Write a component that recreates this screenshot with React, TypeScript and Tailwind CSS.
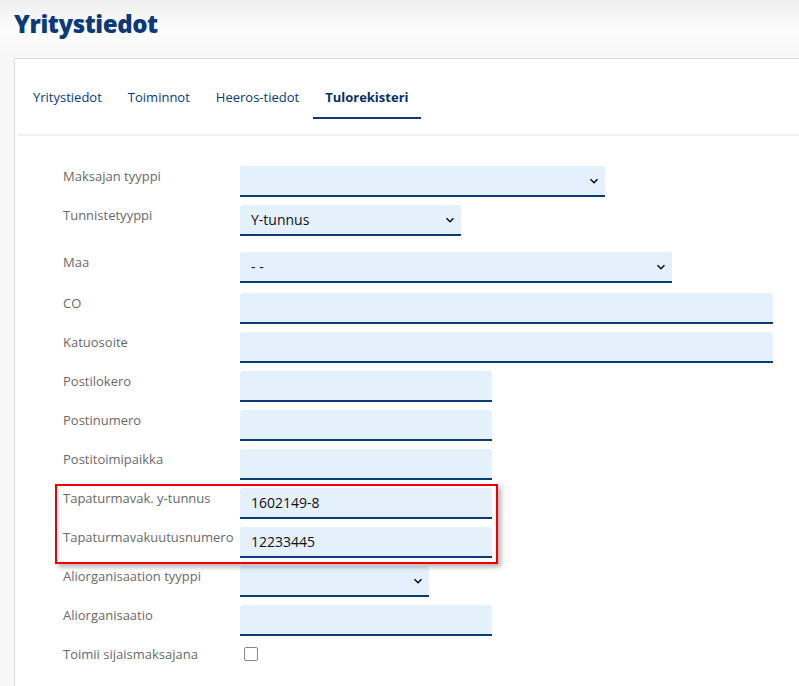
import React from "react";

type Field = {
  label: string;
  kind: "select" | "input" | "checkbox";
  width?: string;
  value?: string;
  rowClass?: string;
};

const fields: Field[] = [
  { label: "Maksajan tyyppi", kind: "select", width: "w-[365px]" },
  { label: "Tunnistetyyppi", kind: "select", width: "w-[221px]", value: "Y-tunnus" },
  { label: "Maa", kind: "select", width: "w-[432px]", value: "- -", rowClass: "pt-[8px] pb-[10px]" },
  { label: "CO", kind: "input", width: "w-[533px]" },
  { label: "Katuosoite", kind: "input", width: "w-[533px]" },
  { label: "Postilokero", kind: "input", width: "w-[252px]" },
  { label: "Postinumero", kind: "input", width: "w-[252px]" },
  { label: "Postitoimipaikka", kind: "input", width: "w-[252px]" },
  { label: "Tapaturmavak. y-tunnus", kind: "input", width: "w-[252px]", value: "1602149-8" },
  { label: "Tapaturmavakuutusnumero", kind: "input", width: "w-[252px]", value: "12233445" },
  { label: "Aliorganisaation tyyppi", kind: "select", width: "w-[189px]" },
  { label: "Aliorganisaatio", kind: "input", width: "w-[252px]" },
  { label: "Toimii sijaismaksajana", kind: "checkbox" },
];

const tabs = ["Yritystiedot", "Toiminnot", "Heeros-tiedot", "Tulorekisteri"];

function Chevron() {
  return (
    <svg width="10" height="6" viewBox="0 0 10 6" className="shrink-0">
      <path d="M1.5 1.2l3.5 3.5 3.5-3.5" fill="none" stroke="#111" strokeWidth="1.6" />
    </svg>
  );
}

function Control({ field }: { field: Field }) {
  if (field.kind === "checkbox") {
    return (
      <div className="h-[14px] w-[14px] mt-[3px] ml-[4px] rounded-[2px] border border-[#8a8a8a] bg-white" />
    );
  }
  return (
    <div
      className={`${field.width} h-[31px] flex items-center justify-between rounded-t-[3px] bg-[#e4f0fc] border-b-2 border-[#0b3a78] pl-[11px] pr-[6px] text-[14px] text-[#111]`}
    >
      <span>{field.value ?? ""}</span>
      {field.kind === "select" && <Chevron />}
    </div>
  );
}

export default function App() {
  return (
    <div
      className="min-h-[686px] bg-[#f7f7f7] overflow-hidden"
      style={{ fontFamily: '"Open Sans", "Liberation Sans", sans-serif' }}
    >
      {/* Header */}
      <div className="h-[58px] bg-gradient-to-b from-[#eeeeee] via-[#fdfdfd] to-[#f7f7f7] pl-[14px] pt-[6px]">
        <h1 className="text-[24px] leading-[36px] font-extrabold text-[#0b3a78] tracking-[-0.4px]">
          Yritystiedot
        </h1>
      </div>

      {/* Card */}
      <div className="ml-[14px] border-l border-t border-[#dcdcdc] bg-white min-h-[628px] relative">
        {/* Tabs */}
        <div className="flex gap-[2px] pl-[6px] pt-[28px]">
          {tabs.map((t, i) => (
            <div
              key={t}
              className={`px-3 pb-[10px] text-[13px] leading-5 ${
                i === 3
                  ? "font-bold text-[#0a2f66] border-b-2 border-[#0b3a78]"
                  : "text-[#0b3a78] border-b-2 border-transparent"
              }`}
            >
              {t}
            </div>
          ))}
        </div>
        <div className="mt-[15px] ml-[3px] h-[2px] bg-[#f0f0f0]" />

        {/* Form */}
        <div className="pl-[48px] pt-[30px]">
          {fields.map((f) => (
            <div key={f.label} className={`flex ${f.rowClass ?? "pb-[8px]"}`}>
              <div className="w-[177px] shrink-0 text-[13px] leading-5 text-[#6a6a6a]">
                {f.label}
              </div>
              <Control field={f} />
            </div>
          ))}
        </div>

        {/* Annotation overlay */}
        <div className="absolute left-[40px] top-[425px] w-[443px] h-[80px] border-2 border-[#ee0000] shadow-[3px_3px_5px_rgba(0,0,0,0.3)] pointer-events-none" />
      </div>
    </div>
  );
}
